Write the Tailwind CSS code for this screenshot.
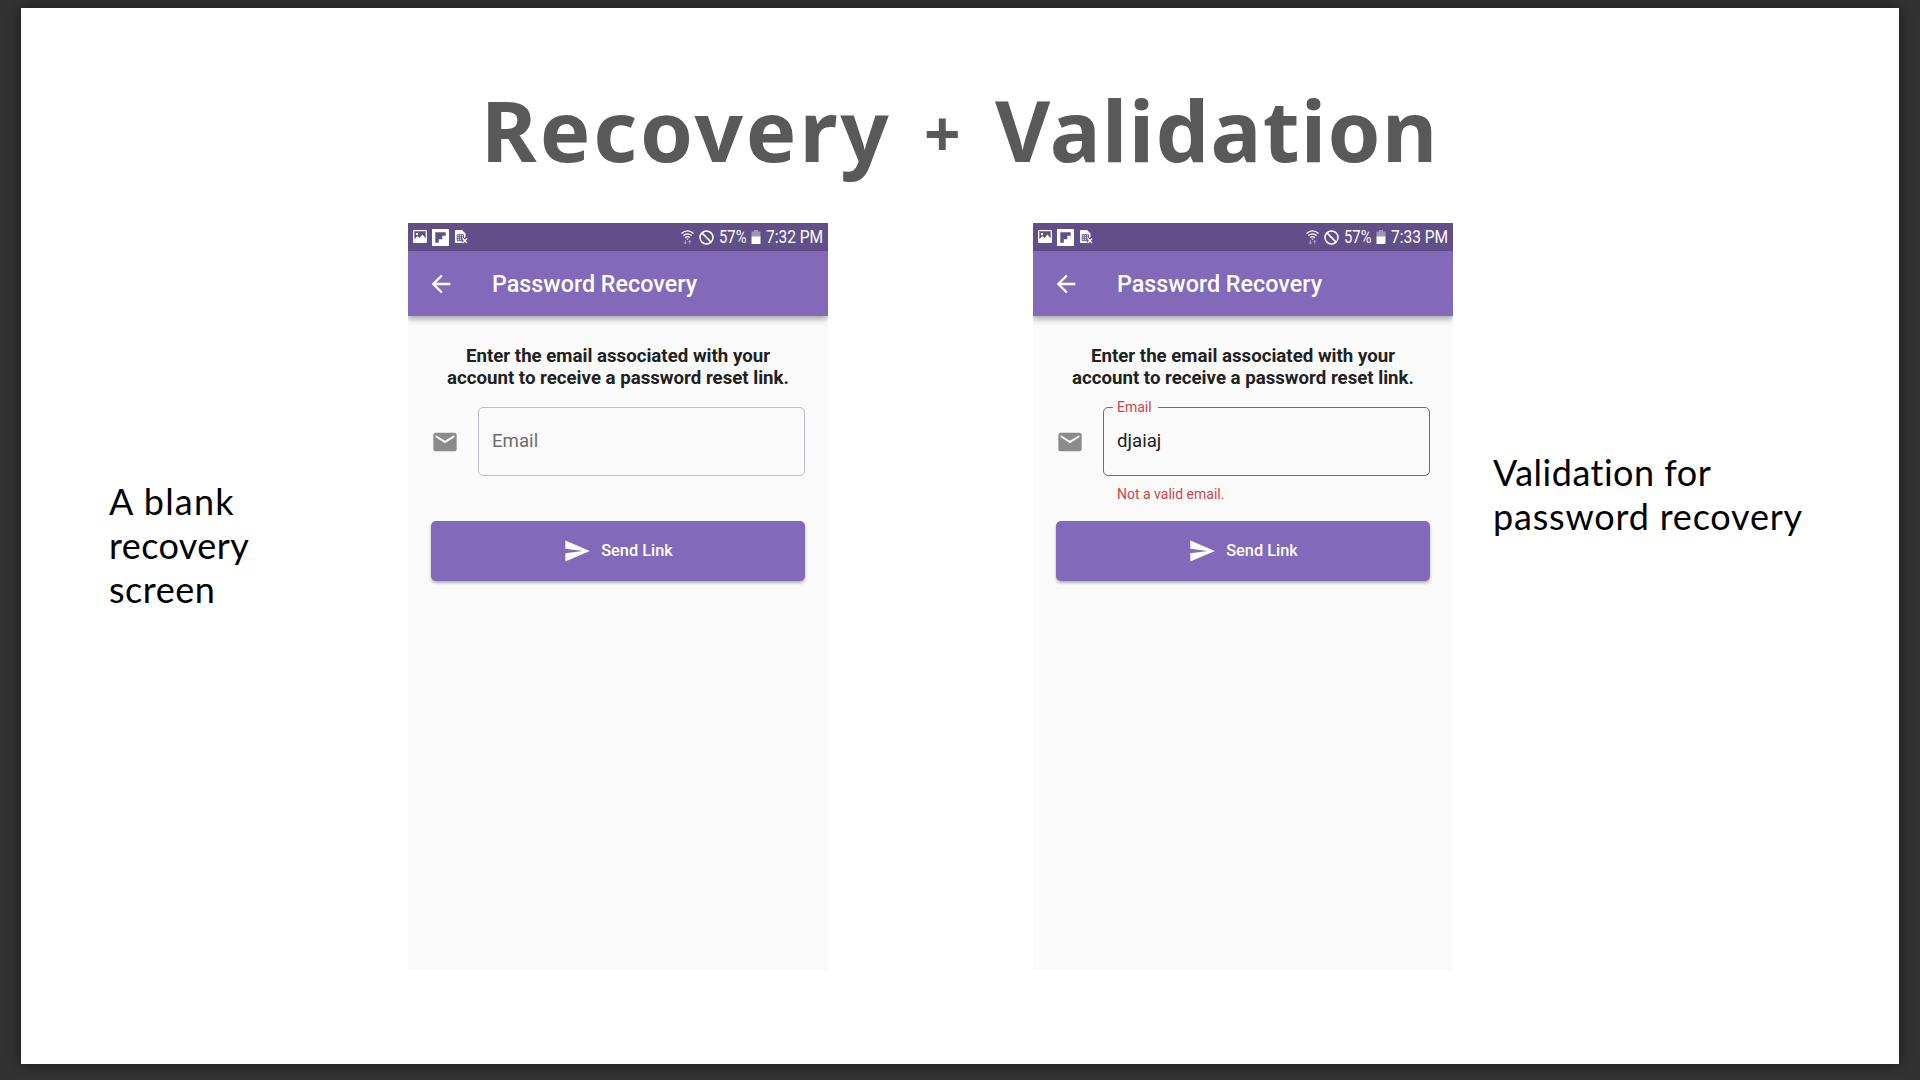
<!DOCTYPE html>
<html lang="en">
<head>
<meta charset="utf-8">
<title>Recovery + Validation</title>
<script src="https://cdn.jsdelivr.net/npm/@tailwindcss/browser@4"></script>
</head>
<body class="h-[1080px] w-[1920px] overflow-hidden bg-[#323232] pt-2 pl-[21px]">
<svg class="hidden">
  <symbol id="image" viewBox="0 0 14 14"><path fill="#fff" fill-rule="evenodd" d="M1 0h12a1 1 0 0 1 1 1v11a1 1 0 0 1-1 1H1a1 1 0 0 1-1-1V1a1 1 0 0 1 1-1zM1.3 1.3v8L4.500 6l2 2L9.500 4.500l3.200 4V1.300zM3 3h2v2H3z"/></symbol>
  <symbol id="flip" viewBox="0 0 17 17"><path fill="#fff" fill-rule="evenodd" d="M0 0h17v17H0zM3.300 3.300v10.400h3.500v-3.500h3.500V6.800h3.400V3.300z"/></symbol>
  <symbol id="sim" viewBox="0 0 14 14"><path fill="#fff" d="M1 0h6l3.500 3.500V7L8 9v4H1a1 1 0 0 1-1-1V1a1 1 0 0 1 1-1z"/><path stroke="#624f8a" stroke-width=".9" fill="none" d="M2.200 4.700h6.300v6H2.200zM4.300 4.700v6M6.400 4.700v6M2.200 6.700h6.300M2.200 8.700h6.300"/><path stroke="#624f8a" stroke-width="3" d="m7.500 8.500 4.500 4.500m0-4.500L7.500 13"/><path stroke="#fff" stroke-width="1.300" d="m7.700 8.500 4.300 4.500m0-4.500L7.700 13"/></symbol>
  <symbol id="wifi" viewBox="0 0 13 15"><g fill="none" stroke="#fff" stroke-width="1.300"><path d="M.5 3.400q6-5 12 0M2.300 5.600q4.200-3.600 8.400 0M4.100 7.700q2.400-2 4.800 0"/></g><path fill="#fff" d="M5.200 8.800h2.600L6.500 10z"/><g fill="none" stroke="#a99cc4" stroke-width="1"><path d="M4.300 10v4M2.800 12.300l1.500 1.700 1.500-1.700M8.700 14.300v-4M7.200 12l1.500-1.700 1.500 1.700"/></g></symbol>
  <symbol id="block" viewBox="0 0 15 15"><g fill="none" stroke="#fff" stroke-width="1.500"><circle cx="7.500" cy="7.500" r="6.500"/><path d="m2.900 2.900 9.200 9.200"/></g></symbol>
  <symbol id="battery" viewBox="0 0 10 14"><path fill="#a195b9" d="M3 0h4v1.500h2.500V7H.5V1.500H3z"/><path fill="#fff" d="M.5 6.500h9V14h-9z"/></symbol>
  <symbol id="back" viewBox="0 0 24 24"><path fill="#fff" d="M20 11H7.830l5.590-5.590L12 4l-8 8 8 8 1.410-1.410L7.830 13H20v-2z"/></symbol>
  <symbol id="mail" viewBox="0 0 24 24"><path fill="#8b8b8b" d="M20 4H4c-1.100 0-1.990.9-1.990 2L2 18c0 1.100.9 2 2 2h16c1.100 0 2-.9 2-2V6c0-1.100-.9-2-2-2zm0 4l-8 5-8-5V6l8 5 8-5v2z"/></symbol>
  <symbol id="send" viewBox="0 0 24 24"><path fill="#fff" d="M2.010 21L23 12 2.010 3 2 10l15 2-15 2z"/></symbol>
</svg>
<main class="h-[1056px] w-[1878px] bg-white pt-[71px] shadow-[0_0_12px_rgba(0,0,0,0.45)]">
  <h1 class="flex h-[100px] pl-[460px] font-['Noto_Sans'] text-[85px] leading-[100px] font-bold whitespace-nowrap text-[#595959]">
    <span class="w-[443px] tracking-[2.9px]">Recovery</span>
    <span class="w-[71px] pt-1 text-[64px]">+</span>
    <span class="tracking-[1.3px]">Validation</span>
  </h1>
  <div class="mt-[44px] flex">
    <p class="mt-[256px] w-[387px] pl-[88px] font-['Lato'] text-[36px] leading-[44px] text-black"><span class="tracking-[1.2px]">A blank</span><br><span class="tracking-[0.4px]">recovery</span><br><span class="tracking-[0.5px]">screen</span></p>
    <section class="h-[747px] w-[420px] overflow-hidden bg-[#fafafa] font-['Roboto']">
      <div class="flex h-7 items-center bg-[#624f8a] pr-1.5 pl-[5px] text-[18.5px] text-white">
        <svg class="h-[14px] w-[14px]"><use href="#image"/></svg>
        <svg class="ml-[5px] h-[17px] w-[17px]"><use href="#flip"/></svg>
        <svg class="ml-1.5 h-[14px] w-[14px]"><use href="#sim"/></svg>
        <svg class="ml-auto h-[15px] w-[13px]"><use href="#wifi"/></svg>
        <svg class="ml-[5px] h-[15px] w-[15px]"><use href="#block"/></svg>
        <span class="ml-[5px] w-[29px] pt-px"><span class="inline-block origin-left scale-x-80">57%</span></span>
        <svg class="ml-[3px] h-[14px] w-[10px]"><use href="#battery"/></svg>
        <span class="ml-[5px] w-[56px] pt-px whitespace-nowrap"><span class="inline-block origin-left scale-x-84">7:32 PM</span></span>
      </div>
      <div class="flex h-[65px] items-center bg-[#8269b9] pl-[19px] text-[23.33px] font-medium text-white shadow-[0_3px_6px_rgba(0,0,0,0.35)]">
        <svg class="h-7 w-7"><use href="#back"/></svg>
        <span class="ml-[37px] pt-0.5">Password Recovery</span>
      </div>
      <p class="mt-[29px] text-center text-[18.67px] leading-[22px] font-bold text-[#212121]">Enter the email associated with your<br>account to receive a password reset link.</p>
      <div class="mt-[18px] flex items-center pl-[23px]">
        <svg class="h-7 w-7"><use href="#mail"/></svg>
        <div class="ml-[19px] flex h-[69px] w-[327px] items-center rounded-[5px] border border-[#c1bbdb] pb-0.5 pl-[13px] text-[18.67px] text-[#6e6e6e]">Email</div>
      </div>
      <button class="mt-[45px] ml-[23px] flex h-[60px] w-[374px] items-center justify-center gap-[10px] rounded-[5px] bg-[#8269b9] text-[16.33px] font-medium text-white shadow-[0_2px_3px_rgba(0,0,0,0.3)]">
        <svg class="h-7 w-7"><use href="#send"/></svg><span class="pt-px">Send Link</span>
      </button>
    </section>
    <section class="ml-[205px] h-[747px] w-[420px] overflow-hidden bg-[#fafafa] font-['Roboto']">
      <div class="flex h-7 items-center bg-[#624f8a] pr-1.5 pl-[5px] text-[18.5px] text-white">
        <svg class="h-[14px] w-[14px]"><use href="#image"/></svg>
        <svg class="ml-[5px] h-[17px] w-[17px]"><use href="#flip"/></svg>
        <svg class="ml-1.5 h-[14px] w-[14px]"><use href="#sim"/></svg>
        <svg class="ml-auto h-[15px] w-[13px]"><use href="#wifi"/></svg>
        <svg class="ml-[5px] h-[15px] w-[15px]"><use href="#block"/></svg>
        <span class="ml-[5px] w-[29px] pt-px"><span class="inline-block origin-left scale-x-80">57%</span></span>
        <svg class="ml-[3px] h-[14px] w-[10px]"><use href="#battery"/></svg>
        <span class="ml-[5px] w-[56px] pt-px whitespace-nowrap"><span class="inline-block origin-left scale-x-84">7:33 PM</span></span>
      </div>
      <div class="flex h-[65px] items-center bg-[#8269b9] pl-[19px] text-[23.33px] font-medium text-white shadow-[0_3px_6px_rgba(0,0,0,0.35)]">
        <svg class="h-7 w-7"><use href="#back"/></svg>
        <span class="ml-[37px] pt-0.5">Password Recovery</span>
      </div>
      <p class="mt-[29px] text-center text-[18.67px] leading-[22px] font-bold text-[#212121]">Enter the email associated with your<br>account to receive a password reset link.</p>
      <div class="mt-[18px] flex items-center pl-[23px]">
        <svg class="h-7 w-7"><use href="#mail"/></svg>
        <div class="relative ml-[19px] flex h-[69px] w-[327px] items-center rounded-[5px] border border-[#cc4548] pb-0.5 pl-[13px] text-[18.67px] text-[#212121]">
          <span class="absolute -top-[9px] left-[9px] w-[45px] bg-[#fafafa] pl-1 text-[14px] leading-4 text-[#cc4548]">Email</span>
          djaiaj
        </div>
      </div>
      <p class="mt-2 h-[37px] pt-0.5 pl-[84px] text-[14px] leading-4 text-[#cc4548]">Not a valid email.</p>
      <button class="ml-[23px] flex h-[60px] w-[374px] items-center justify-center gap-[10px] rounded-[5px] bg-[#8269b9] text-[16.33px] font-medium text-white shadow-[0_2px_3px_rgba(0,0,0,0.3)]">
        <svg class="h-7 w-7"><use href="#send"/></svg><span class="pt-px">Send Link</span>
      </button>
    </section>
    <p class="mt-[227px] ml-[40px] font-['Lato'] text-[36px] leading-[44px] whitespace-nowrap text-black"><span class="tracking-[0.5px]">Validation for</span><br><span class="tracking-[0.8px]">password recovery</span></p>
  </div>
</main>
</body>
</html>
